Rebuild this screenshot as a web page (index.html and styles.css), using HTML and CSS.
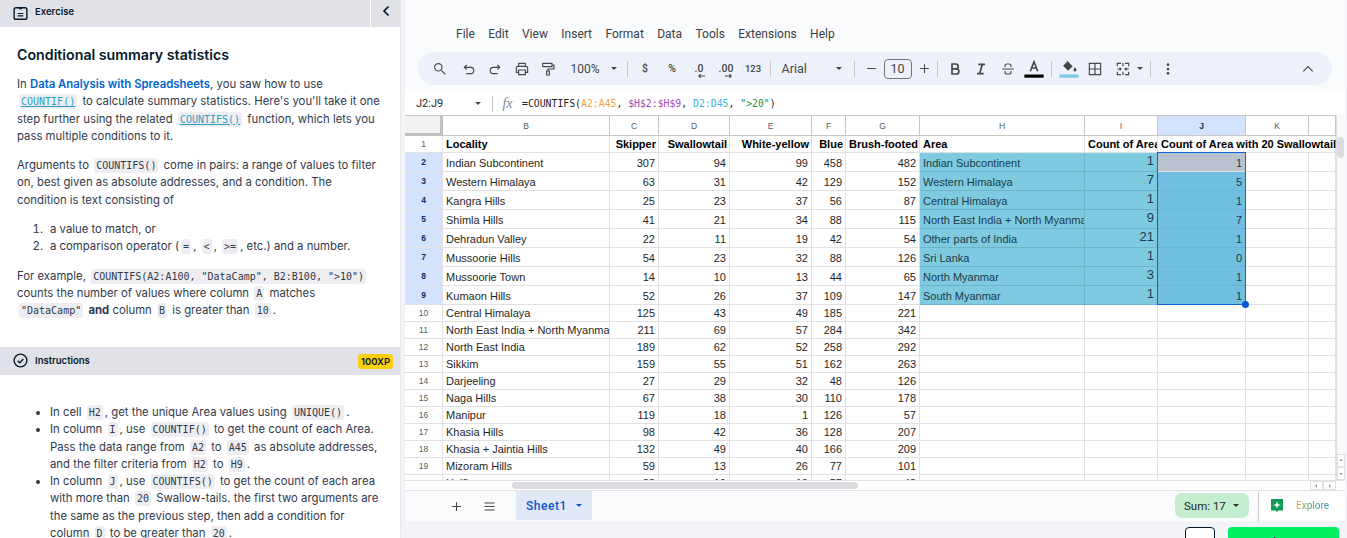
FILE: index.html
```html
<!DOCTYPE html>
<html lang="en">
<head>
    <meta charset="UTF-8">
    <meta name="viewport" content="width=device-width, initial-scale=1.0">
    <title>Conditional summary statistics</title>
    <link rel="stylesheet" href="styles.css">
</head>
<body>
    <aside class="panel">
        <div class="panel-top">
            <div class="panel-title">
                <svg class="bar-icon" viewBox="0 0 16 16"><rect x="1.2" y="1.8" width="13.6" height="12.4" rx="2" fill="none" stroke="#05192d" stroke-width="1.5"/><path d="M6.6 1.8a1.4 1.4 0 0 0 2.8 0M5 8h6M5 10.6h6" fill="none" stroke="#05192d" stroke-width="1.3"/></svg>
                <span>Exercise</span>
            </div>
            <div class="panel-back">
                <svg viewBox="0 0 10 12" width="10" height="12"><path d="M7.5 1.5 3 6l4.5 4.5" fill="none" stroke="#05192d" stroke-width="1.7"/></svg>
            </div>
        </div>
        <div class="panel-body">
            <h2>Conditional summary statistics</h2>
            <p>In <a class="course" href="#">Data Analysis with Spreadsheets</a>, you saw how to use <a class="code link" href="#">COUNTIF()</a> to calculate summary statistics. Here's you'll take it one step further using the related <a class="code link" href="#">COUNTIFS()</a> function, which lets you pass multiple conditions to it.</p>
            <p>Arguments to <code class="code">COUNTIFS()</code> come in pairs: a range of values to filter on, best given as absolute addresses, and a condition. The condition is text consisting of</p>
            <ol>
                <li>a value to match, or</li>
                <li>a comparison operator (<code class="code">=</code>, <code class="code">&lt;</code>, <code class="code">&gt;=</code>, etc.) and a number.</li>
            </ol>
            <p>For example, <code class="code">COUNTIFS(A2:A100, "DataCamp", B2:B100, "&gt;10")</code> counts the number of values where column <code class="code">A</code> matches <code class="code">"DataCamp"</code> <strong>and</strong> column <code class="code">B</code> is greater than <code class="code">10</code>.</p>
        </div>
        <div class="panel-bar">
            <div class="panel-title">
                <svg class="bar-icon" viewBox="0 0 16 16"><circle cx="8" cy="8" r="6.8" fill="none" stroke="#05192d" stroke-width="1.5"/><path d="m5 8.2 2.2 2.2L11 6.4" fill="none" stroke="#05192d" stroke-width="1.5"/></svg>
                <span>Instructions</span>
            </div>
            <span class="xp">100XP</span>
        </div>
        <div class="panel-steps">
            <ul>
                <li>In cell <code class="code">H2</code>, get the unique Area values using <code class="code">UNIQUE()</code>.</li>
                <li>In column <code class="code">I</code>, use <code class="code">COUNTIF()</code> to get the count of each Area. Pass the data range from <code class="code">A2</code> to <code class="code">A45</code> as absolute addresses, and the filter criteria from <code class="code">H2</code> to <code class="code">H9</code>.</li>
                <li>In column <code class="code">J</code>, use <code class="code">COUNTIFS()</code> to get the count of each area with more than <code class="code">20</code> Swallow-tails. the first two arguments are the same as the previous step, then add a condition for column <code class="code">D</code> to be greater than <code class="code">20</code>.</li>
            </ul>
        </div>
    </aside>

    <main class="workspace">
        <div class="sheets">
            <div class="sheets-top">
                <nav class="menu">
                    <span>File</span><span>Edit</span><span>View</span><span>Insert</span><span>Format</span><span>Data</span><span>Tools</span><span>Extensions</span><span>Help</span>
                </nav>
                <div class="toolbar">
                    <span class="tool search-tool"><svg viewBox="0 0 24 24"><circle cx="9.5" cy="9.5" r="5.5" class="line"/><path d="m14 14 6 6" class="line"/></svg></span>
                    <span class="tool"><svg viewBox="0 0 24 24"><path d="M8.5 6 5 9.5 8.5 13M5 9.5h9.5a4.7 4.7 0 0 1 0 9.4H8" class="line"/></svg></span>
                    <span class="tool"><svg viewBox="0 0 24 24"><path d="M15.5 6 19 9.5 15.500 13M19 9.500H9.500a4.700 4.700 0 0 0 0 9.400H16" class="line"/></svg></span>
                    <span class="tool"><svg viewBox="0 0 24 24"><path d="M7 8V3.500h10V8M7 17H3.500v-6.500A2.500 2.500 0 0 1 6 8h12a2.500 2.500 0 0 1 2.500 2.500V17H17M7 13.500h10v7H7z" class="line"/></svg></span>
                    <span class="tool"><svg viewBox="0 0 24 24"><path d="M4 3.500h14v5H4zM18 6h3v6h-9v3M10 15h4v6h-4z" class="line"/></svg></span>
                    <span class="zoom-value">100%</span><i class="caret"></i>
                    <b class="sep zoom-sep"></b>
                    <span class="fmt">$</span>
                    <span class="fmt">%</span>
                    <span class="fmt decimal">.0<svg viewBox="0 0 10 6"><path d="M9 3H2M4 1 2 3l2 2" class="line thin"/></svg></span>
                    <span class="fmt decimal">.00<svg viewBox="0 0 10 6"><path d="M1 3h7M6 1l2 2-2 2" class="line thin"/></svg></span>
                    <span class="fmt numbers">123</span>
                    <b class="sep sep-font"></b>
                    <span class="font-name">Arial</span><i class="caret font-caret"></i>
                    <b class="sep"></b>
                    <span class="tool size-tool"><svg viewBox="0 0 24 24"><path d="M5 12h14" class="line"/></svg></span>
                    <span class="font-size">10</span>
                    <span class="tool size-tool"><svg viewBox="0 0 24 24"><path d="M5 12h14M12 5v14" class="line"/></svg></span>
                    <b class="sep"></b>
                    <span class="tool"><svg viewBox="0 0 24 24"><path d="M7.500 4.500h5.500a3.600 3.600 0 0 1 0 7.400H7.500zM7.500 11.900H14a3.800 3.800 0 0 1 0 7.600H7.500z" class="line heavy"/></svg></span>
                    <span class="tool"><svg viewBox="0 0 24 24"><path d="M8 5h10M6 19h10M14 5l-4 14" class="line heavy"/></svg></span>
                    <span class="tool"><svg viewBox="0 0 24 24"><path d="M3 12h18M7.500 9V7.500a3 3 0 0 1 3-3h3a3 3 0 0 1 3 3V9M7.500 15v1.500a3 3 0 0 0 3 3h3a3 3 0 0 0 3-3V15" class="line"/></svg></span>
                    <span class="tool"><svg class="bar-tool" viewBox="0 0 24 24"><path d="M8 14.500 12 4l4 10.500M9.200 11h5.600" class="line"/><rect x="1.500" y="18" width="21" height="3.500" fill="#000"/></svg></span>
                    <b class="sep sep-colour"></b>
                    <span class="tool"><svg class="bar-tool" viewBox="0 0 24 24"><path d="M9.500 2.500 16 9l-5 5-5.500-5.500L10 4z" fill="#444746"/><path d="M18.500 10s-1.600 2-1.600 3.100a1.600 1.600 0 0 0 3.200 0c0-1.100-1.600-3.100-1.600-3.100z" fill="#444746"/><rect x="1.500" y="18" width="21" height="3.500" fill="#7ecbe1"/></svg></span>
                    <span class="tool"><svg viewBox="0 0 24 24"><path d="M3.500 3.500h17v17h-17zM12 3.500v17M3.500 12h17" class="line"/></svg></span>
                    <span class="tool merge-tool"><svg viewBox="0 0 24 24"><path d="M9 3.500H3.500V8M15 3.500h5.500V8M3.500 16v4.500H9M20.500 16v4.500H15M3.500 12H9M7 10l2 2-2 2M20.500 12H15M17 10l-2 2 2 2M12 3v5M12 16v5" class="line"/></svg></span>
                    <i class="caret merge-caret"></i>
                    <b class="sep"></b>
                    <span class="tool"><svg viewBox="0 0 24 24"><circle cx="12" cy="5.500" r="2" fill="#444746"/><circle cx="12" cy="12" r="2" fill="#444746"/><circle cx="12" cy="18.500" r="2" fill="#444746"/></svg></span>
                    <span class="tool collapse-tool"><svg viewBox="0 0 24 24"><path d="m5 15.500 7-7 7 7" class="line"/></svg></span>
                </div>
            </div>

            <div class="formula-bar">
                <span class="name-box">J2:J9</span><i class="caret"></i>
                <b class="sep formula-sep"></b>
                <span class="fx">fx</span>
                <span class="formula">=COUNTIFS(<span class="ref-a">A2:A45</span>, <span class="ref-h">$H$2:$H$9</span>, <span class="ref-d">D2:D45</span>, <span class="ref-s">"&gt;20"</span>)</span>
            </div>

            <div class="grid-row">
                <div class="grid-wrap">
                    <table class="grid">
                        <colgroup>
                            <col class="c-head"><col class="c-b"><col class="c-c"><col class="c-d"><col class="c-e"><col class="c-f"><col class="c-g"><col class="c-h"><col class="c-i"><col class="c-j"><col class="c-k"><col class="c-l">
                        </colgroup>
                        <thead>
                            <tr>
                                <th class="corner"></th><th>B</th><th>C</th><th>D</th><th>E</th><th>F</th><th>G</th><th>H</th><th>I</th><th class="on">J</th><th>K</th><th></th>
                            </tr>
                        </thead>
                        <tbody>
                            <tr class="titles"><th>1</th><td>Locality</td><td class="n">Skipper</td><td class="n">Swallowtail</td><td class="n">White-yellow</td><td class="n">Blue</td><td class="n">Brush-footed</td><td>Area</td><td>Count of Area</td><td class="spill">Count of Area with 20 Swallowtail</td><td class="spill"></td><td></td></tr>
                            <tr class="tall"><th class="on">2</th><td>Indian Subcontinent</td><td class="n">307</td><td class="n">94</td><td class="n">99</td><td class="n">458</td><td class="n">482</td><td class="area">Indian Subcontinent</td><td class="area n big">1</td><td class="active n">1</td><td></td><td></td></tr>
                            <tr class="tall"><th class="on">3</th><td>Western Himalaya</td><td class="n">63</td><td class="n">31</td><td class="n">42</td><td class="n">129</td><td class="n">152</td><td class="area">Western Himalaya</td><td class="area n big">7</td><td class="picked n">5</td><td></td><td></td></tr>
                            <tr class="tall"><th class="on">4</th><td>Kangra Hills</td><td class="n">25</td><td class="n">23</td><td class="n">37</td><td class="n">56</td><td class="n">87</td><td class="area">Central Himalaya</td><td class="area n big">1</td><td class="picked n">1</td><td></td><td></td></tr>
                            <tr class="tall"><th class="on">5</th><td>Shimla Hills</td><td class="n">41</td><td class="n">21</td><td class="n">34</td><td class="n">88</td><td class="n">115</td><td class="area">North East India + North Myanmar</td><td class="area n big">9</td><td class="picked n">7</td><td></td><td></td></tr>
                            <tr class="tall"><th class="on">6</th><td>Dehradun Valley</td><td class="n">22</td><td class="n">11</td><td class="n">19</td><td class="n">42</td><td class="n">54</td><td class="area">Other parts of India</td><td class="area n big">21</td><td class="picked n">1</td><td></td><td></td></tr>
                            <tr class="tall"><th class="on">7</th><td>Mussoorie Hills</td><td class="n">54</td><td class="n">23</td><td class="n">32</td><td class="n">88</td><td class="n">126</td><td class="area">Sri Lanka</td><td class="area n big">1</td><td class="picked n">0</td><td></td><td></td></tr>
                            <tr class="tall"><th class="on">8</th><td>Mussoorie Town</td><td class="n">14</td><td class="n">10</td><td class="n">13</td><td class="n">44</td><td class="n">65</td><td class="area">North Myanmar</td><td class="area n big">3</td><td class="picked n">1</td><td></td><td></td></tr>
                            <tr class="tall"><th class="on">9</th><td>Kumaon Hills</td><td class="n">52</td><td class="n">26</td><td class="n">37</td><td class="n">109</td><td class="n">147</td><td class="area">South Myanmar</td><td class="area n big">1</td><td class="picked n">1</td><td></td><td></td></tr>
                            <tr><th>10</th><td>Central Himalaya</td><td class="n">125</td><td class="n">43</td><td class="n">49</td><td class="n">185</td><td class="n">221</td><td></td><td></td><td></td><td></td><td></td></tr>
                            <tr><th>11</th><td>North East India + North Myanmar</td><td class="n">211</td><td class="n">69</td><td class="n">57</td><td class="n">284</td><td class="n">342</td><td></td><td></td><td></td><td></td><td></td></tr>
                            <tr><th>12</th><td>North East India</td><td class="n">189</td><td class="n">62</td><td class="n">52</td><td class="n">258</td><td class="n">292</td><td></td><td></td><td></td><td></td><td></td></tr>
                            <tr><th>13</th><td>Sikkim</td><td class="n">159</td><td class="n">55</td><td class="n">51</td><td class="n">162</td><td class="n">263</td><td></td><td></td><td></td><td></td><td></td></tr>
                            <tr><th>14</th><td>Darjeeling</td><td class="n">27</td><td class="n">29</td><td class="n">32</td><td class="n">48</td><td class="n">126</td><td></td><td></td><td></td><td></td><td></td></tr>
                            <tr><th>15</th><td>Naga Hills</td><td class="n">67</td><td class="n">38</td><td class="n">30</td><td class="n">110</td><td class="n">178</td><td></td><td></td><td></td><td></td><td></td></tr>
                            <tr><th>16</th><td>Manipur</td><td class="n">119</td><td class="n">18</td><td class="n">1</td><td class="n">126</td><td class="n">57</td><td></td><td></td><td></td><td></td><td></td></tr>
                            <tr><th>17</th><td>Khasia Hills</td><td class="n">98</td><td class="n">42</td><td class="n">36</td><td class="n">128</td><td class="n">207</td><td></td><td></td><td></td><td></td><td></td></tr>
                            <tr><th>18</th><td>Khasia + Jaintia Hills</td><td class="n">132</td><td class="n">49</td><td class="n">40</td><td class="n">166</td><td class="n">209</td><td></td><td></td><td></td><td></td><td></td></tr>
                            <tr><th>19</th><td>Mizoram Hills</td><td class="n">59</td><td class="n">13</td><td class="n">26</td><td class="n">77</td><td class="n">101</td><td></td><td></td><td></td><td></td><td></td></tr>
                            <tr><th>20</th><td>Halflong</td><td class="n">33</td><td class="n">10</td><td class="n">10</td><td class="n">57</td><td class="n">43</td><td></td><td></td><td></td><td></td><td></td></tr>
                        </tbody>
                    </table>
                    <div class="selection"><span class="handle"></span></div>
                </div>
                <div class="vscroll">
                    <div class="vthumb"></div>
                    <div class="varrows">
                        <span class="arrow-box"><i class="tri tri-up"></i></span>
                        <span class="arrow-box"><i class="tri tri-down"></i></span>
                    </div>
                </div>
            </div>

            <div class="hscroll">
                <div class="hthumb"></div>
                <div class="harrows">
                    <span class="arrow-box"><i class="tri tri-left"></i></span>
                    <span class="arrow-box"><i class="tri tri-right"></i></span>
                </div>
            </div>

            <div class="tabs">
                <svg class="tab-icon" viewBox="0 0 24 24"><path d="M5 12h14M12 5v14" class="line"/></svg>
                <svg class="tab-icon" viewBox="0 0 24 24"><path d="M4 6.500h16M4 12h16M4 17.500h16" class="line"/></svg>
                <div class="tab">Sheet1<i class="caret tab-caret"></i></div>
                <div class="sum">Sum: 17<i class="caret sum-caret"></i></div>
                <div class="explore">
                    <svg viewBox="0 0 12 13" width="12" height="13"><path d="M0 0h12v11.500H7.500L6 13l-1.500-1.500H0z" fill="#0f9d58"/><path d="M6 2.200 7 5l2.600.900L7 6.900 6 9.500 5 6.900l-2.600-1L5 5z" fill="#fff"/></svg>
                    <span>Explore</span>
                </div>
            </div>
        </div>
        <div class="actions">
            <button class="btn-keys"><svg viewBox="0 0 10 10" width="10" height="10"><path d="M3 1v8M7 1 4 5l3 4" fill="none" stroke="#05192d" stroke-width="1.2"/></svg></button>
            <button class="btn-submit">Submit Answer</button>
        </div>
    </main>
</body>
</html>
```

FILE: styles.css
```css
* {
    box-sizing: border-box;
}

body {
    font-family: Inter, Arial, sans-serif;
    margin: 0;
    height: 100vh;
    display: flex;
    overflow: hidden;
    background-color: #f3f4f8;
    color: #30394c;
}

/* left exercise panel */
.panel {
    width: 401px;
    flex: none;
    height: 538px;
    overflow: hidden;
    background-color: #fff;
    border-right: 1px solid #e8e9ed;
    font-size: 11.35px;
    line-height: 17.3px;
}

.panel-top {
    display: flex;
    height: 27px;
}

.panel-title {
    flex: 1;
    display: flex;
    align-items: center;
    gap: 7px;
    padding-left: 13px;
    background-color: #e0e2e8;
    font-size: 9.5px;
    font-weight: 600;
    color: #05192d;
}

.panel-top .panel-title span {
    margin-bottom: 3px;
}

.bar-icon {
    width: 15px;
    height: 15px;
}

.panel-back {
    width: 29px;
    margin-left: 1px;
    background-color: #e0e2e8;
    display: flex;
    align-items: flex-start;
    justify-content: center;
    padding-top: 5px;
}

.panel-body {
    height: 320px;
    padding: 19px 17px 0;
}

.panel-body h2 {
    margin: 0 0 12px;
    font-size: 14.2px;
    line-height: 18px;
    font-weight: 600;
    color: #05192d;
}

.panel-body p {
    margin: 0 0 12px;
}

.course {
    color: #0065d1;
    font-weight: 600;
    text-decoration: none;
}

.code {
    font-family: "DejaVu Sans Mono", monospace;
    font-size: 10px;
    background-color: #eeeef2;
    border-radius: 3px;
    padding: 2px 2px;
    margin: 0 2px;
}

.code.link {
    color: #2e9ec0;
    text-decoration: underline;
}

.panel ol {
    margin: 0 0 12px;
    padding-left: 29px;
}

.panel ol li {
    padding-left: 4px;
}

.panel ul {
    margin: 0;
    padding-left: 33px;
}

.panel-bar {
    display: flex;
    align-items: center;
    height: 28px;
    background-color: #e0e2e8;
    padding-right: 7px;
}

.xp {
    background-color: #fcce0d;
    border-radius: 4px;
    height: 15px;
    width: 35px;
    font-size: 9.5px;
    line-height: 15px;
    font-weight: 600;
    text-align: center;
    color: #05192d;
}

.panel-steps {
    padding: 29px 17px 0;
}

/* spreadsheet */
.workspace {
    flex: 1;
    min-width: 0;
    height: 538px;
    padding-left: 4px;
    display: flex;
    flex-direction: column;
    font-family: Roboto, Arial, sans-serif;
}

.sheets {
    width: 940px;
    background-color: #f9fbfd;
    color: #444746;
}

.sheets-top {
    height: 92px;
    padding: 26px 13px 0;
}

.menu {
    display: flex;
    gap: 13.4px;
    height: 17px;
    padding-left: 38px;
    font-size: 12px;
    line-height: 17px;
    color: #3c4043;
    margin-bottom: 9px;
}

.toolbar {
    display: flex;
    align-items: center;
    height: 33px;
    padding-left: 9px;
    border-radius: 17px;
    background-color: #edf2fa;
}

.tool {
    width: 26.5px;
    flex: none;
    display: flex;
    justify-content: center;
}

.tool svg {
    width: 16px;
    height: 16px;
}

.tool svg.bar-tool {
    width: 22px;
    height: 22px;
}

.search-tool {
    margin-right: 2px;
}

.line {
    fill: none;
    stroke: #444746;
    stroke-width: 1.7;
}

.line.thin {
    stroke-width: 1.2;
}

.line.heavy {
    stroke-width: 2.5;
}

.zoom-value {
    width: 40px;
    margin-left: 9px;
    font-size: 12px;
}

.caret {
    flex: none;
    width: 0;
    height: 0;
    border-left: 3.5px solid transparent;
    border-right: 3.5px solid transparent;
    border-top: 3.5px solid #444746;
    display: inline-block;
}

.sep {
    flex: none;
    width: 1px;
    height: 16px;
    margin-right: 4px;
    background-color: #c7c7c7;
}

.zoom-sep {
    margin-left: 10px;
}

.sep-font {
    margin-left: 3px;
}

.sep-colour {
    margin-left: 3px;
}

.fmt {
    flex: none;
    width: 27px;
    font-size: 10.5px;
    font-weight: 500;
    text-align: center;
    position: relative;
}

.decimal svg {
    position: absolute;
    left: 11px;
    top: 11px;
    width: 9px;
    height: 6px;
}

.numbers {
    font-size: 9.5px;
}

.font-name {
    width: 54px;
    margin-left: 7px;
    font-size: 12.5px;
}

.font-caret {
    margin-right: 12px;
}

.font-size {
    flex: none;
    width: 28px;
    height: 20px;
    border: 1px solid #747775;
    border-radius: 4px;
    text-align: center;
    font-size: 12.5px;
    line-height: 18px;
}

.size-tool {
    width: 25px;
}

.size-tool svg {
    width: 15px;
    height: 15px;
}

.merge-tool {
    width: 28px;
}

.merge-caret {
    margin-right: 7px;
}

.collapse-tool {
    margin-left: 114px;
}

.formula-bar {
    display: flex;
    align-items: center;
    height: 23px;
    background-color: #fff;
    font-size: 11px;
    color: #1f1f1f;
}

.name-box {
    width: 70px;
    padding-left: 11px;
}

.formula-sep {
    margin-left: 11px;
    margin-right: 0;
}

.fx {
    width: 29px;
    text-align: center;
    font-family: "Liberation Serif", serif;
    font-style: italic;
    font-size: 14px;
    color: #80868b;
}

.formula {
    font-family: "DejaVu Sans Mono", monospace;
    font-size: 9.8px;
}

.ref-a {
    color: #f5a442;
}

.ref-h {
    color: #9a4fb5;
}

.ref-d {
    color: #3db7dd;
}

.ref-s {
    color: #1e8e3e;
}

.grid-row {
    display: flex;
    height: 365px;
    background-color: #fff;
}

.grid-wrap {
    position: relative;
    width: 931px;
    flex: none;
    overflow: hidden;
}

.grid {
    table-layout: fixed;
    width: 931px;
    border-collapse: separate;
    border-spacing: 0;
    font-family: "Liberation Sans", Arial, sans-serif;
    font-size: 11px;
    color: #1f1f1f;
}

.c-head { width: 38px; }
.c-b { width: 167px; }
.c-c { width: 49px; }
.c-d { width: 71px; }
.c-e { width: 82px; }
.c-f { width: 34px; }
.c-g { width: 74px; }
.c-h { width: 165px; }
.c-i { width: 73px; }
.c-j { width: 88px; }
.c-k { width: 63px; }
.c-l { width: 27px; }

.grid th,
.grid td {
    height: 17px;
    padding: 0 3px;
    border-right: 1px solid #e1e1e1;
    border-bottom: 1px solid #e1e1e1;
    white-space: nowrap;
    overflow: hidden;
}

.grid thead th {
    height: 21px;
    border-top: 1px solid #c7c7c7;
    border-right-color: #c7c7c7;
    border-bottom-color: #c7c7c7;
    font-size: 8.5px;
    font-weight: 400;
    color: #575a5e;
    text-align: center;
}

.grid thead th.corner {
    background-color: #f2f2f2;
    border-right: 3px solid #c0c0c0;
    border-bottom: 3px solid #c0c0c0;
}

.grid tbody th {
    font-size: 8.5px;
    font-weight: 400;
    color: #575a5e;
    text-align: center;
    padding: 0;
}

.grid th.on,
.grid thead th.on {
    background-color: #d3e3fd;
    color: #0b2f66;
    font-weight: 700;
}

.titles td {
    font-weight: 700;
    color: #000;
}

.titles td.n {
    padding-right: 2px;
}

.tall td,
.tall th {
    height: 19px;
}

.tall td {
    padding-top: 2px;
}

.n {
    text-align: right;
}

.grid td.spill {
    overflow: visible;
    border-right: none;
}

.grid td.area {
    background-color: #7ecbe1;
    color: #1c3a4a;
    border-color: #6fb5c9;
}

.grid td.picked {
    background-color: #71bfe0;
    color: #1c3a4a;
    border-color: #6bb6d6;
}

.grid td.active {
    background-color: #b9c2ce;
    color: #1c3a4a;
}

.grid td.big {
    font-size: 13px;
    padding-top: 0;
    padding-bottom: 3px;
}

.selection {
    position: absolute;
    left: 752px;
    top: 37px;
    width: 89px;
    height: 153px;
    border: 1px solid #0b64da;
}

.handle {
    position: absolute;
    right: -4px;
    bottom: -4px;
    width: 7px;
    height: 7px;
    border-radius: 50%;
    background-color: #0b57d0;
}

.vscroll {
    width: 9px;
    display: flex;
    flex-direction: column;
    background-color: #f8f9fa;
    border-left: 1px solid #e1e1e1;
}

.vthumb {
    width: 7px;
    height: 21px;
    margin-top: 22px;
    border-radius: 4px;
    background-color: #dadce0;
}

.varrows {
    margin-top: auto;
}

.arrow-box {
    display: flex;
    align-items: center;
    justify-content: center;
    width: 13px;
    height: 13px;
    border: 1px solid #e1e1e1;
    background-color: #fff;
}

.varrows .arrow-box {
    width: 8px;
}

.tri {
    width: 0;
    height: 0;
    border: 2.5px solid transparent;
}

.tri-up {
    border-bottom-color: #9aa0a6;
    margin-top: -3px;
}

.tri-down {
    border-top-color: #9aa0a6;
    margin-top: 3px;
}

.tri-left {
    border-right-color: #9aa0a6;
    margin-left: -3px;
}

.tri-right {
    border-left-color: #9aa0a6;
    margin-left: 3px;
}

.hscroll {
    display: flex;
    align-items: center;
    height: 10px;
    padding-left: 107px;
    background-color: #fff;
    border-top: 1px solid #e1e1e1;
}

.hthumb {
    width: 346px;
    height: 7px;
    border-radius: 4px;
    background-color: #dadce0;
}

.harrows {
    display: flex;
    margin-left: auto;
    margin-right: 9px;
}

.harrows .arrow-box {
    height: 9px;
}

.tabs {
    display: flex;
    align-items: center;
    height: 31px;
    padding-left: 44px;
    border-top: 1px solid #e1e3e6;
}

.tab-icon {
    width: 15px;
    height: 15px;
    margin-right: 18px;
}

.tab {
    width: 76px;
    height: 29px;
    margin-left: 1px;
    margin-top: -1px;
    padding-left: 10px;
    display: flex;
    align-items: center;
    background-color: #e1e9f7;
    color: #0b57d0;
    font-size: 12px;
    font-weight: 500;
    letter-spacing: 0.55px;
}

.tab-caret {
    margin-left: 9px;
    border-top-color: #0b57d0;
}

.sum {
    display: flex;
    align-items: center;
    margin-left: auto;
    margin-top: -1px;
    height: 25px;
    width: 74px;
    padding-left: 9px;
    border-radius: 7px;
    background-color: #c4eed0;
    color: #1f1f1f;
    font-size: 11.5px;
}

.sum-caret {
    margin-left: 7px;
    border-top-color: #333;
}

.explore {
    display: flex;
    align-items: center;
    gap: 13px;
    width: 87px;
    height: 29px;
    margin-left: 9px;
    padding-left: 12px;
    padding-bottom: 2px;
    border-left: 1px solid #c7c7c7;
    background-color: #fff;
    font-size: 10px;
}

.explore span {
    background: linear-gradient(90deg, #e0a63a, #43a86d 45%, #3b8ecb);
    -webkit-background-clip: text;
    background-clip: text;
    color: transparent;
}

/* bottom buttons */
.actions {
    display: flex;
    justify-content: flex-end;
    align-items: flex-start;
    gap: 13px;
    height: 17px;
    padding: 6px 8px 0 0;
    overflow: hidden;
}

.actions button {
    flex: none;
    height: 36px;
    border-radius: 4px;
    cursor: pointer;
}

.btn-keys {
    width: 30px;
    padding: 6px 0 0;
    border: 1px solid #05192d;
    background-color: #fff;
}

.btn-submit {
    width: 111px;
    padding: 0 0 4px;
    border: none;
    background-color: #03ef62;
    color: #05192d;
    font-family: Inter, Arial, sans-serif;
    font-size: 11.5px;
    font-weight: 700;
}
```
